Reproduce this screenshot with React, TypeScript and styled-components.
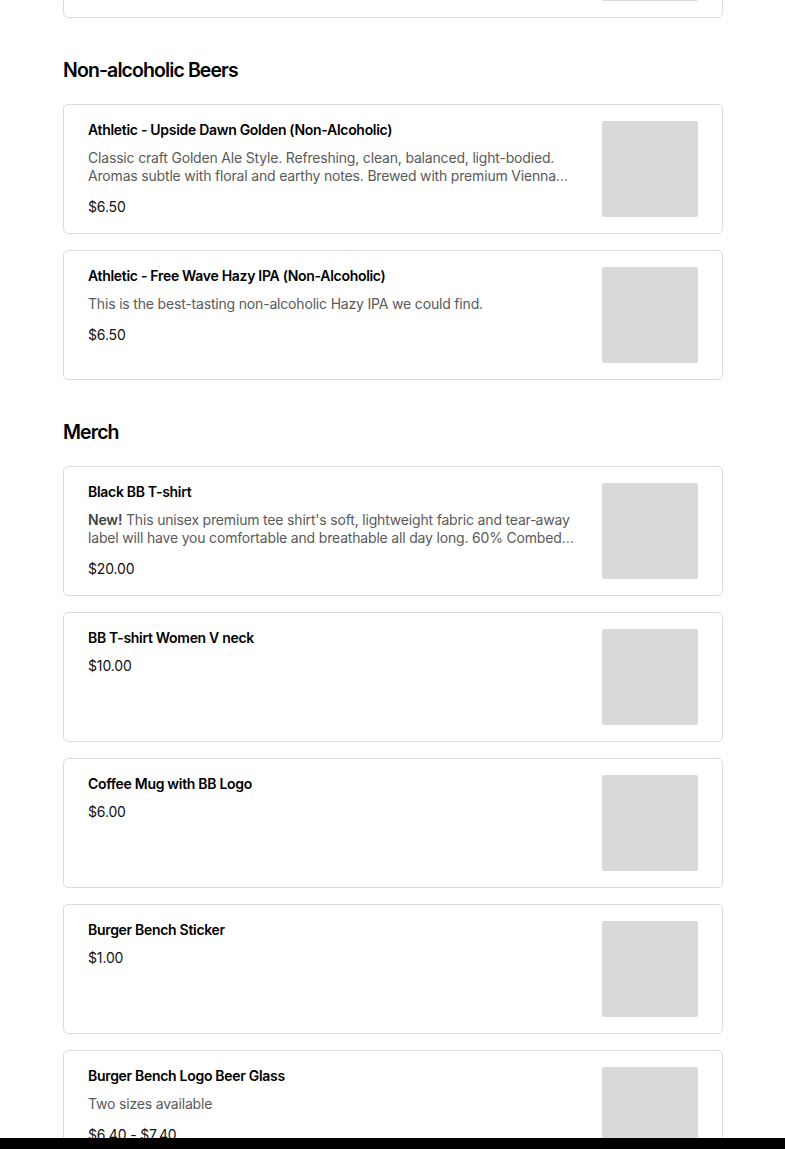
import React from "react";
import styled, { createGlobalStyle } from "styled-components";

const Global = createGlobalStyle`
  html, body { margin: 0; padding: 0; background: #fff; }
  body { font-family: Inter, "Liberation Sans", Arial, sans-serif; color: #000; -webkit-font-smoothing: antialiased; }
  * { box-sizing: border-box; }
`;

const Page = styled.div`
  width: 660px;
  margin: -112px 0 0 63px;
  padding-bottom: 40px;
`;

const Section = styled.section`
  display: flex;
  flex-direction: column;
  gap: 16px;
`;

const SectionTitle = styled.h2`
  margin: 38px 0 4px;
  font-size: 19.5px;
  line-height: 28px;
  font-weight: 600;
  letter-spacing: -0.9px;
  color: #000;
`;

const Card = styled.div`
  display: flex;
  gap: 24px;
  border: 1px solid #dcdcdc;
  border-radius: 5px;
  padding: 16px 24px 16px 24px;
  background: #fff;
`;

const Info = styled.div`
  flex: 1;
  min-width: 0;
  display: flex;
  flex-direction: column;
  gap: 10px;
`;

const Title = styled.div`
  font-size: 14px;
  line-height: 17px;
  font-weight: 600;
  letter-spacing: -0.3px;
`;

const Desc = styled.div`
  margin: 1px 0 2px;
  font-size: 14px;
  line-height: 18px;
  letter-spacing: -0.18px;
  color: #5a5a5a;
  display: -webkit-box;
  -webkit-line-clamp: 2;
  -webkit-box-orient: vertical;
  overflow: hidden;
  b { font-weight: 600; color: #444; }
`;

const Price = styled.div`
  font-size: 14px;
  line-height: 20px;
  letter-spacing: -0.15px;
  color: #111;
`;

const Thumb = styled.div`
  width: 96px;
  height: 96px;
  flex: none;
  background: #d9d9d9;
  border-radius: 2px;
`;

const BottomBar = styled.div`
  position: fixed;
  left: 0;
  right: 0;
  bottom: 0;
  height: 11px;
  background: #000;
`;

type Item = { title: string; desc?: React.ReactNode; price: string };

const ItemCard = ({ item }: { item: Item }) => (
  <Card>
    <Info>
      <Title>{item.title}</Title>
      {item.desc && <Desc>{item.desc}</Desc>}
      <Price>{item.price}</Price>
    </Info>
    <Thumb />
  </Card>
);

const nonAlc: Item[] = [
  {
    title: "Athletic - Upside Dawn Golden (Non-Alcoholic)",
    desc:
      "Classic craft Golden Ale Style. Refreshing, clean, balanced, light-bodied. Aromas subtle with floral and earthy notes. Brewed with premium Vienna malt and a blend of Northwest hops.",
    price: "$6.50",
  },
  {
    title: "Athletic - Free Wave Hazy IPA (Non-Alcoholic)",
    desc: "This is the best-tasting non-alcoholic Hazy IPA we could find.",
    price: "$6.50",
  },
];

const merch: Item[] = [
  {
    title: "Black BB T-shirt",
    desc: (
      <>
        <b>New!</b> This unisex premium tee shirt's soft, lightweight fabric and tear&#8209;away label will have you comfortable and breathable all day long. 60% Combed ring-spun cotton, 40% polyester.
      </>
    ),
    price: "$20.00",
  },
  { title: "BB T-shirt Women V neck", price: "$10.00" },
  { title: "Coffee Mug with BB Logo", price: "$6.00" },
  { title: "Burger Bench Sticker", price: "$1.00" },
  { title: "Burger Bench Logo Beer Glass", desc: "Two sizes available", price: "$6.40 - $7.40" },
];

export default function App() {
  return (
    <>
      <Global />
      <Page>
        <Section>
          <ItemCard item={{ title: "Athletic - Run Wild IPA (Non-Alcoholic)", price: "$6.50" }} />
        </Section>
        <Section>
          <SectionTitle>Non-alcoholic Beers</SectionTitle>
          {nonAlc.map((it) => (
            <ItemCard key={it.title} item={it} />
          ))}
        </Section>
        <Section>
          <SectionTitle>Merch</SectionTitle>
          {merch.map((it) => (
            <ItemCard key={it.title} item={it} />
          ))}
        </Section>
      </Page>
      <BottomBar />
    </>
  );
}
